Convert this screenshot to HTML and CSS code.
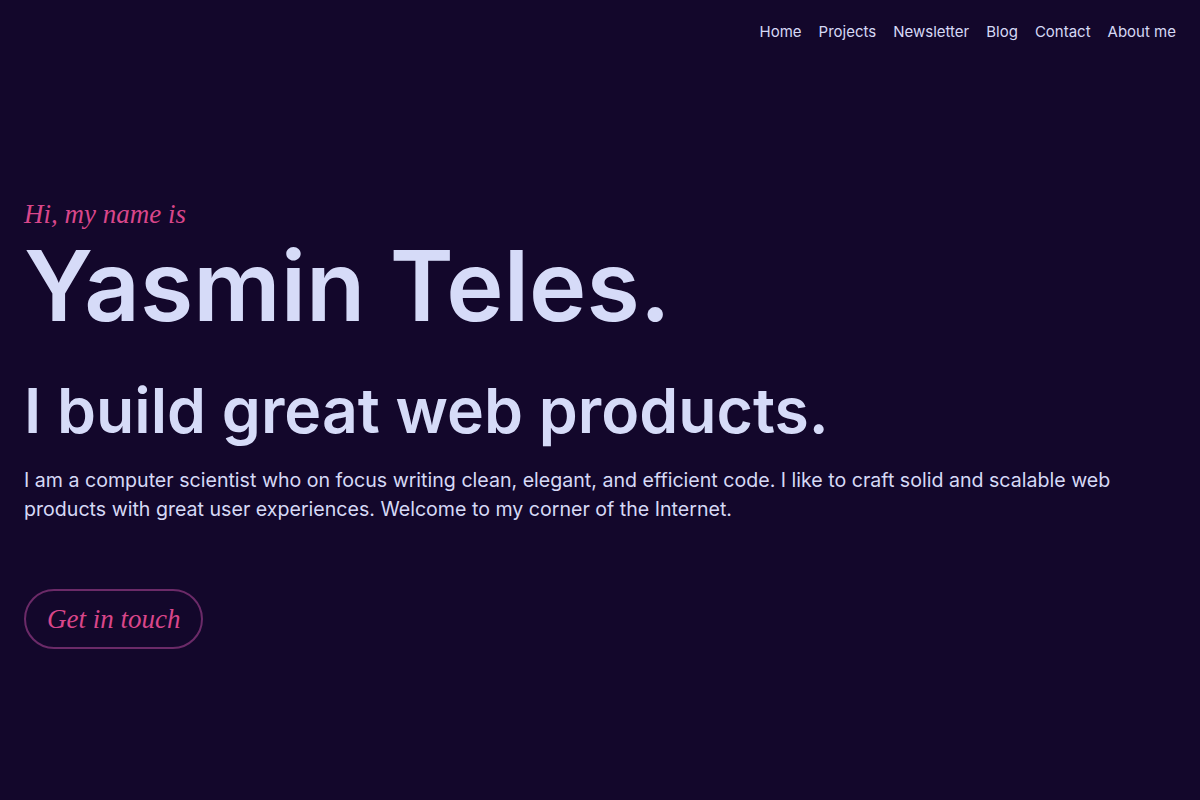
FILE: index.html
```html
<!DOCTYPE html>
<html lang="en">
<head>
    <meta charset="UTF-8">
    <meta name="viewport" content="width=device-width, initial-scale=1.0">
    <title>Yasmin Teles</title>
    <link rel="stylesheet" href="styles.css">
</head>
<body>
    <header class="topbar">
        <nav class="menu">
            <a href="#">Home</a>
            <a href="#">Projects</a>
            <a href="#">Newsletter</a>
            <a href="#">Blog</a>
            <a href="#">Contact</a>
            <a href="#">About me</a>
        </nav>
    </header>
    <main class="hero">
        <p class="hello">Hi, my name is</p>
        <h1 class="name">Yasmin Teles.</h1>
        <h2 class="tagline">I build great web products.</h2>
        <p class="about">I am a computer scientist who on focus writing clean, elegant, and efficient code. I like to craft solid and scalable web products with great user experiences. Welcome to my corner of the Internet.</p>
        <a class="contact-btn" href="#">Get in touch</a>
    </main>
</body>
</html>
```

FILE: styles.css
```css
body {
    font-family: 'Inter', sans-serif;
    background: #13072b;
    color: #d6d9f6;
    margin: 0;
    min-height: 100vh;
}

.topbar {
    display: flex;
    justify-content: flex-end;
    padding: 22px 24px 0;
}

.menu {
    display: flex;
    gap: 17px;
}

.menu a {
    color: #d6d9f6;
    text-decoration: none;
    font-size: 15px;
}

.hero {
    padding: 0 24px;
    margin-top: 158px;
}

.hello {
    font-family: 'Liberation Serif', serif;
    font-style: italic;
    color: #d9468a;
    font-size: 27px;
    line-height: 30px;
    margin: 0;
}

.name {
    font-size: 97px;
    font-weight: 600;
    line-height: 1;
    margin: 8px 0 0;
    color: #d6dbf8;
}

.tagline {
    font-size: 62.5px;
    font-weight: 600;
    line-height: 1.2;
    margin: 39px 0 0;
    color: #d6dbf8;
}

.about {
    font-size: 19.6px;
    line-height: 29px;
    margin: 18px 0 0;
    max-width: 1120px;
}

.contact-btn {
    display: inline-block;
    margin-top: 65px;
    padding: 12px 21px;
    line-height: 32px;
    border: 2px solid #6b2a68;
    border-radius: 30px;
    font-family: 'Liberation Serif', serif;
    font-style: italic;
    font-size: 27px;
    color: #d9468a;
    text-decoration: none;
}
```
